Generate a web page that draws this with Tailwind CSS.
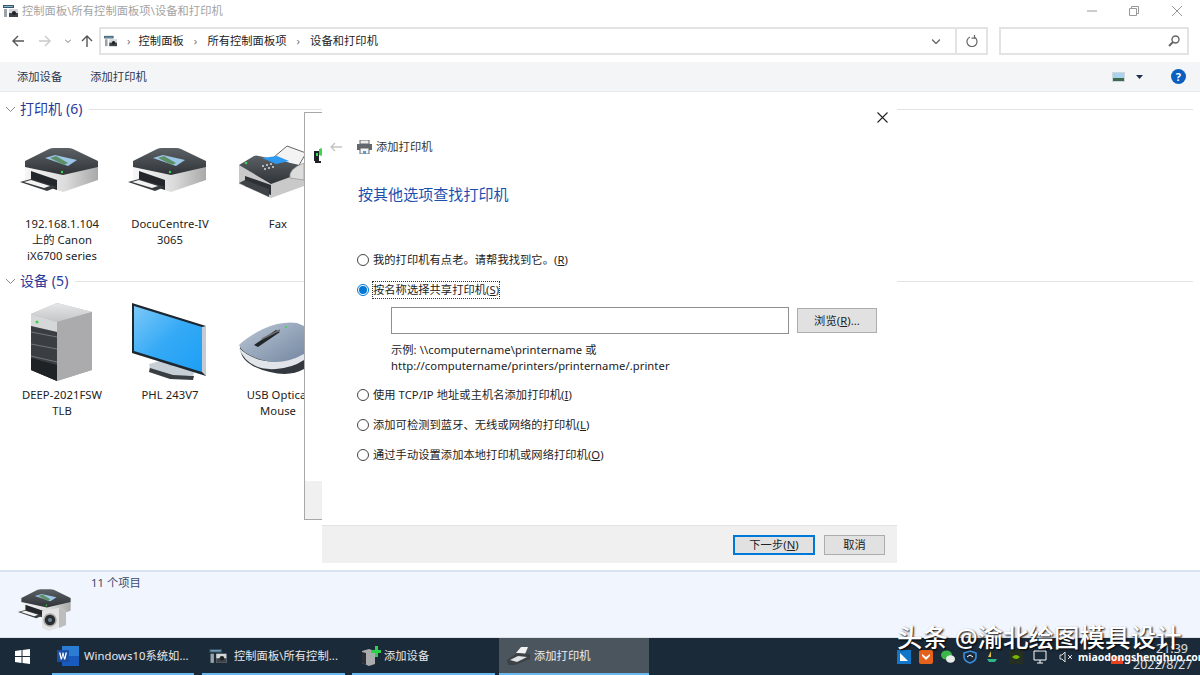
<!DOCTYPE html>
<html lang="zh-CN">
<head>
    <meta charset="UTF-8">
    <title>设备和打印机</title>
    <script src="https://cdn.jsdelivr.net/npm/@tailwindcss/browser@4"></script>
</head>
<body class="w-[1200px] h-[675px] overflow-hidden relative bg-white text-[11.25px] leading-4 tracking-[0.06px] text-[#222] font-['Noto_Sans','Noto_Sans_CJK_SC',sans-serif]">

    <!-- shared icons -->
    <svg width="0" height="0" class="absolute">
        <defs>
            <linearGradient id="lidFill" x1="0" y1="0" x2="0" y2="1"><stop offset="0" stop-color="#5c6166"/><stop offset="1" stop-color="#2f3337"/></linearGradient>
            <linearGradient id="bodyFill" x1="0" y1="0" x2="1" y2="0"><stop offset="0" stop-color="#f6f6f6"/><stop offset=".55" stop-color="#dcdcdc"/><stop offset="1" stop-color="#a9a9a9"/></linearGradient>
            <linearGradient id="screenFill" x1="0" y1="0" x2="1" y2="1"><stop offset="0" stop-color="#7cc8f8"/><stop offset=".5" stop-color="#35aaf6"/><stop offset="1" stop-color="#1d9ff5"/></linearGradient>
            <linearGradient id="towerFill" x1="0" y1="0" x2="0" y2="1"><stop offset="0" stop-color="#e6e7e9"/><stop offset="1" stop-color="#c4c5c7"/></linearGradient>
            <linearGradient id="mouseFill" x1="0" y1="0" x2="1" y2="1"><stop offset="0" stop-color="#bcc8d6"/><stop offset="1" stop-color="#7488a2"/></linearGradient>
            <symbol id="printer" viewBox="20 145 80 50">
                <path d="M25 167v13l38 12 35-12v-13z" fill="url(#bodyFill)"/>
                <path d="M31 171l26 9v10l-26-9z" fill="#23272b"/>
                <path d="M20 182l11-3 26 8-10 4z" fill="#3a3d40"/>
                <path d="M24 182l7-2 19 6-6 2z" fill="#f4f4f4"/>
                <path d="M25 161l24-12q2-1 5-1h14q3 0 5 1l25 12v6l-35 8-38-8z" fill="url(#lidFill)"/>
                <path d="M45 158l10-3 22 5-9 6z" fill="#9cc6e6"/>
                <path d="M50 158l6-2 12 7-4 2z" fill="#5d8f68"/>
                <circle cx="62" cy="172" r="1.200" fill="#37d84b"/>
            </symbol>
            <symbol id="fax" viewBox="238 145 66 54">
                <path d="M274 157l13-11 19 7-8 14z" fill="#f3f3f3" stroke="#666" stroke-width="1"/>
                <path d="M239 165v19l32 14 33-12v-18z" fill="#c9c9c9"/>
                <path d="M245 176l26 9v10l-26-9z" fill="#2d3135"/>
                <path d="M239 183l6-3 24 9v8z" fill="#3f4347"/>
                <path d="M239 165l15-9q2-1 5 0l45 10v6l-33 12z" fill="url(#lidFill)"/>
                <path d="M262 158l15-2 12 5-13 3z" fill="#2f9bf0"/>
                <g fill="#d8d8d8"><circle cx="263" cy="166" r="1"/><circle cx="267" cy="165" r="1"/><circle cx="271" cy="164" r="1"/><circle cx="265" cy="169" r="1"/><circle cx="269" cy="168" r="1"/><circle cx="273" cy="167" r="1"/></g>
                <circle cx="246" cy="163" r="1.300" fill="#37d84b"/>
                <path d="M290 178q-2-9 14-15v17z" fill="#dcdcdc" stroke="#888" stroke-width=".6"/>
            </symbol>
            <symbol id="tower" viewBox="30 303 68 78">
                <path d="M31 314l26-11 35 9v58l-35 11-26-11z" fill="#b2b2b4"/>
                <path d="M31 314l26-11 35 9-35 10z" fill="url(#towerFill)"/>
                <path d="M57 322l35-10v58l-35 11z" fill="#ababad"/>
                <path d="M31 314l26 8v10l-26-6z" fill="#d6d7d9"/>
                <path d="M31 326l26 6v49l-26-11z" fill="#3a3e42"/>
                <path d="M31 332l26 5M31 344l26 5M31 356l26 6" stroke="#80848a" stroke-width=".8" fill="none"/>
                <path d="M31 358l26 7v16l-26-11z" fill="#1f2225"/>
                <circle cx="37" cy="322" r="1.600" fill="#37d84b"/>
            </symbol>
            <symbol id="monitor" viewBox="132 303 74 80">
                <path d="M150 367l21 6 23 3-1 4-23-1-21-7z" fill="#3a3f44"/>
                <path d="M149 364l26-7 20 12-2 7-20-1-23-7z" fill="#c6cfd6"/>
                <path d="M169 356h6v10h-6z" fill="#b4bcc2"/>
                <path d="M132 303l74 23v50l-74-23z" fill="#1d2730"/>
                <path d="M134 306l68 21v45l-68-21z" fill="url(#screenFill)"/>
                <path d="M202 327l4-1v50l-4-4z" fill="#c4ccd2"/>
            </symbol>
            <symbol id="usbmouse" viewBox="238 333 66 59">
                <path d="M240 358q0 18 30 25 20 5 34-3v-12z" fill="#32383e"/>
                <path d="M238 358q10 24 38 22 16-1 28-9v-6q-40 18-66-7z" fill="#e1e4e8"/>
                <path d="M239 356q8-8 24-16 18-8 34-6l7 3v28q-22 12-42 6-20-6-23-15z" fill="url(#mouseFill)"/>
                <path d="M254 356l22-15 4 2-22 15z" fill="#22262a"/>
                <path d="M262 350l18-9" stroke="#6f6f6f" stroke-width="1.500"/>
                <circle cx="286" cy="338" r="1" fill="#37d84b"/>
            </symbol>
            <symbol id="cp" viewBox="0 0 16 14">
                <path d="M0 1h11v3H0z" fill="#3b5566"/>
                <path d="M1 2h9v1H1z" fill="#7fb8d8"/>
                <path d="M1 5h3v8H1z" fill="#9aa3aa"/>
                <path d="M6 5h9v8H6z" fill="#d3d6d8"/>
                <path d="M6 9h9v4H6z" fill="#3d4348"/>
                <circle cx="11" cy="9" r="2" fill="#1e2226"/>
            </symbol>
        </defs>
    </svg>

    <!-- explorer window -->
    <div class="flex flex-col h-[637px]">
        <div class="h-[21px] flex items-center pl-[3px] text-[#a3a3a3]">
            <svg class="w-[16px] h-[14px] mr-[3px]"><use href="#cp"/></svg>
            <span>控制面板\所有控制面板项\设备和打印机</span>
            <div class="ml-auto flex items-center">
                <svg class="w-[10px] h-[10px] mr-[32px]" viewBox="0 0 10 10"><path d="M0 5h10" stroke="#999" fill="none"/></svg>
                <svg class="w-[10px] h-[10px] mr-[33px]" viewBox="0 0 10 10"><path d="M.5 2.500h7v7h-7zM2.500 2.500v-2h7v7h-2" stroke="#999" fill="none"/></svg>
                <svg class="w-[10px] h-[10px] mr-[18px]" viewBox="0 0 10 10"><path d="M0 0l10 10M10 0L0 10" stroke="#999" fill="none"/></svg>
            </div>
        </div>

        <div class="h-[41px] flex items-center pb-[1px]">
            <div class="w-[99px] flex items-center shrink-0">
                <svg class="w-[12px] h-[12px] ml-[12px]" viewBox="0 0 12 12"><path d="M12 6H1M6 1L1 6l5 5" stroke="#555" stroke-width="1.400" fill="none"/></svg>
                <svg class="w-[12px] h-[12px] ml-[15px]" viewBox="0 0 12 12"><path d="M0 6h11M6 1l5 5-5 5" stroke="#c9c9c9" stroke-width="1.400" fill="none"/></svg>
                <svg class="w-[6px] h-[4px] ml-[14px]" viewBox="0 0 6 4"><path d="M0 .5l3 3 3-3" stroke="#777" fill="none"/></svg>
                <svg class="w-[12px] h-[12px] ml-[10px]" viewBox="0 0 12 12"><path d="M6 12V1M1 6l5-5 5 5" stroke="#555" stroke-width="1.400" fill="none"/></svg>
            </div>
            <div class="w-[889px] h-[28px] border-2 border-[#e3e3e3] flex items-center shrink-0">
                <svg class="w-[14px] h-[12px] ml-[3px]"><use href="#cp"/></svg>
                <span class="ml-[9px] mr-[8px] text-[#777]">›</span>
                <span>控制面板</span>
                <span class="mx-[10px] text-[#777]">›</span>
                <span>所有控制面板项</span>
                <span class="mx-[10px] text-[#777]">›</span>
                <span>设备和打印机</span>
                <svg class="w-[8px] h-[5px] ml-auto mr-[15px]" viewBox="0 0 8 5"><path d="M0 .5l4 4 4-4" stroke="#666" stroke-width="1.300" fill="none"/></svg>
                <div class="w-[31px] h-full border-l-2 border-[#e3e3e3] flex items-center justify-center">
                    <svg class="w-[12px] h-[12px]" viewBox="0 0 12 12"><path d="M4 2a5 5 0 1 0 5 .6M8.500 0v3.200H5.500" stroke="#666" stroke-width="1.200" fill="none"/></svg>
                </div>
            </div>
            <div class="w-[190px] h-[28px] ml-[11px] border-2 border-[#e3e3e3] flex items-center justify-end pr-[7px] shrink-0">
                <svg class="w-[12px] h-[12px]" viewBox="0 0 12 12"><circle cx="7.500" cy="4.500" r="3.500" stroke="#666" stroke-width="1.400" fill="none"/><path d="M5 7l-4 4" stroke="#666" stroke-width="2"/></svg>
            </div>
        </div>

        <div class="h-[30px] bg-[#f4f5f7] border-b border-[#e8e9ea] flex items-center pl-[17px] text-[#2a3550]">
            <span>添加设备</span>
            <span class="ml-[28px]">添加打印机</span>
            <svg class="w-[13px] h-[10px] ml-auto" viewBox="0 0 13 10"><path d="M0 0h13v10H0z" fill="#cfd6dc"/><path d="M1 1h11v5H1z" fill="#a9d3ec"/><path d="M1 6h11v3H1z" fill="#3f6a4b"/></svg>
            <svg class="w-[7px] h-[4px] ml-[11px]" viewBox="0 0 7 4"><path d="M0 0h7L3.500 4z" fill="#1e2f4f"/></svg>
            <div class="ml-[28px] mr-[14px] w-[15px] h-[15px] rounded-full bg-[#0a5fc0] flex items-center justify-center text-white text-[11px] font-bold">?</div>
        </div>

        <div class="flex-1 bg-white overflow-hidden">
            <div class="flex items-center h-[20px] mt-[7px] pl-[6px] pr-[7px]">
                <svg class="w-[9px] h-[5px]" viewBox="0 0 9 5"><path d="M0 0l4.500 4.500L9 0" stroke="#888" fill="none"/></svg>
                <span class="ml-[5px] text-[14px] text-[#2a3a9a]">打印机 (6)</span>
                <div class="flex-1 h-[1px] bg-[#e4e4e4] ml-[7px]"></div>
            </div>
            <div class="grid grid-cols-[108px_108px_108px] pl-[8px] mt-[26px] h-[126px]">
                <div class="flex flex-col items-center text-center">
                    <svg class="w-[80px] h-[50px] mr-[4px]"><use href="#printer"/></svg>
                    <div class="mt-[21px]">192.168.1.104<br>上的 Canon<br>iX6700 series</div>
                </div>
                <div class="flex flex-col items-center text-center">
                    <svg class="w-[80px] h-[50px] mr-[4px]"><use href="#printer"/></svg>
                    <div class="mt-[21px]">DocuCentre-IV<br>3065</div>
                </div>
                <div class="flex flex-col items-center text-center">
                    <svg class="w-[66px] h-[54px] mr-[14px] -mb-[4px]"><use href="#fax"/></svg>
                    <div class="mt-[21px]">Fax</div>
                </div>
            </div>
            <div class="flex items-center h-[20px] pl-[6px] pr-[7px]">
                <svg class="w-[9px] h-[5px]" viewBox="0 0 9 5"><path d="M0 0l4.500 4.500L9 0" stroke="#888" fill="none"/></svg>
                <span class="ml-[5px] text-[14px] text-[#2a3a9a]">设备 (5)</span>
                <div class="flex-1 h-[1px] bg-[#e4e4e4] ml-[7px]"></div>
            </div>
            <div class="grid grid-cols-[108px_108px_108px] pl-[8px] mt-[12px]">
                <div class="flex flex-col items-center text-center">
                    <svg class="w-[68px] h-[78px] ml-[4px]"><use href="#tower"/></svg>
                    <div class="mt-[6px]">DEEP-2021FSW<br>TLB</div>
                </div>
                <div class="flex flex-col items-center text-center">
                    <svg class="w-[74px] h-[80px] mr-[2px] -mb-[2px]"><use href="#monitor"/></svg>
                    <div class="mt-[6px]">PHL 243V7</div>
                </div>
                <div class="flex flex-col items-center text-center">
                    <svg class="w-[66px] h-[59px] mt-[19px] mr-[14px]"><use href="#usbmouse"/></svg>
                    <div class="mt-[6px]">USB Optical<br>Mouse</div>
                </div>
            </div>
        </div>

        <div class="h-[67px] bg-[#f1f5fd] border-t-2 border-[#d9e3f0] relative flex">
            <div class="w-[91px] pl-[18px] pt-[15px]">
                <svg class="w-[54px] h-[44px]" viewBox="0 0 54 44">
                    <svg x="0" y="0" width="54" height="34"><use href="#printer"/></svg>
                    <path d="M24 24l17-3 7 3v14l-17 6-7-3z" fill="#e4e4e4"/>
                    <path d="M41 21l7 3v14l-7 3z" fill="#bdbdbd"/>
                    <circle cx="32" cy="33" r="6" fill="#2a2d30" stroke="#a8a8a8" stroke-width="1.500"/>
                    <circle cx="32" cy="33" r="2" fill="#6a8090"/>
                </svg>
            </div>
            <div class="pt-[3px] text-[#3a4a6a]">11 个项目</div>
        </div>
    </div>

    <!-- taskbar -->
    <div class="h-[38px] bg-[#1b2a38] border-t border-[#dfe3e8] flex text-white/90 relative">
        <div class="w-[52px] flex items-center pl-[15px]">
            <svg class="w-[15px] h-[15px]" viewBox="0 0 15 15"><path d="M0 2l6.500-1v6H0zM7.500 1L15 0v7H7.500zM0 8h6.500v6L0 13zM7.500 8H15v7l-7.500-1z" fill="#fff"/></svg>
        </div>
        <div class="w-[142px] flex items-center border-b-2 border-[#6ab7ee] pl-[5px] gap-[5px]">
            <svg class="w-[22px] h-[20px]" viewBox="0 0 22 20"><path d="M5 0h17v20H5z" fill="#2b7cd3"/><path d="M5 10h17v10H5z" fill="#185abd"/><path d="M0 4h12v12H0z" fill="#1b4fa6"/><path d="M2 6.500h1.500l1 5 1-5h1l1 5 1-5H10l-1.700 7H7l-1-4.500-1 4.500H3.700z" fill="#fff"/></svg>
            <span class="whitespace-nowrap">Windows10系统如...</span>
        </div>
        <div class="w-[143px] ml-[8px] flex items-center border-b-2 border-[#6ab7ee] pl-[7px] gap-[6px]">
            <svg class="w-[19px] h-[16px]"><use href="#cp"/></svg>
            <span class="whitespace-nowrap">控制面板\所有控制...</span>
        </div>
        <div class="w-[143px] ml-[7px] flex items-center border-b-2 border-[#6ab7ee] pl-[9px] gap-[3px]">
            <svg class="w-[20px] h-[20px]" viewBox="0 0 20 20"><path d="M1 5l7-2 6 2v13l-6 2-7-3z" fill="#a9abad"/><path d="M1 6l4 1v12l-4-2z" fill="#2b2f33"/><path d="M14 0h3v4h3v3h-3v4h-3V7h-4V4h4z" fill="#2ed24a"/></svg>
            <span>添加设备</span>
        </div>
        <div class="w-[150px] ml-[4px] flex items-center bg-[#4a555e] border-b-2 border-[#6ab7ee] pl-[8px] gap-[4px]">
            <svg class="w-[23px] h-[18px]" viewBox="0 0 23 18"><path d="M9 6l5-6h7l-3 7z" fill="#f1f1f1"/><path d="M0 13l10-7 13 1v5L8 18H1z" fill="#3c4246"/><path d="M3 13l8-4 9 1-10 5z" fill="#dfe3e6"/></svg>
            <span>添加打印机</span>
        </div>
        <!-- tray -->
        <div class="absolute left-[897px] top-[12px] flex items-center gap-[8px]">
            <svg class="w-[14px] h-[14px]" viewBox="0 0 14 14"><path d="M0 0h14v14H0z" fill="#1277c9"/><path d="M3 3l8 8H3z" fill="#fff"/></svg>
            <svg class="w-[14px] h-[14px]" viewBox="0 0 14 14"><path d="M0 2q0-2 2-2h10q2 0 2 2v10q0 2-2 2H2q-2 0-2-2z" fill="#e4621b"/><path d="M3 4l4 3 4-3v2L7 10 3 6z" fill="#fff"/></svg>
            <svg class="w-[14px] h-[14px]" viewBox="0 0 14 14"><ellipse cx="5.500" cy="5" rx="5.500" ry="4.500" fill="#3cb84a"/><ellipse cx="9.500" cy="9" rx="4.500" ry="3.800" fill="#e8ece8"/></svg>
            <svg class="w-[14px] h-[14px]" viewBox="0 0 14 14"><path d="M7 1l6 2v4q0 4-6 6-6-2-6-6V3z" fill="none" stroke="#3a8fe0" stroke-width="1.600"/><path d="M4 7l3-2 3 2" fill="none" stroke="#fff"/></svg>
            <svg class="w-[14px] h-[14px]" viewBox="0 0 14 14"><path d="M6 1L3 7h3z" fill="#e6c040"/><path d="M2 9h10l-2 3H4z" fill="#2fb58a"/></svg>
            <svg class="w-[14px] h-[14px] ml-[2px]" viewBox="0 0 14 14"><path d="M0 0h14v14H0z" fill="#252f24"/><path d="M3 7q4-4 8 0-4 4-8 0z" fill="#76b900"/></svg>
            <svg class="w-[14px] h-[14px] ml-[2px]" viewBox="0 0 14 14"><path d="M1 1h12v9H1zM7 10v3M4 13h6" stroke="#fff" fill="none"/></svg>
            <svg class="w-[14px] h-[12px] ml-[4px]" viewBox="0 0 14 12"><path d="M1 4h2l3-3v10L3 8H1zM9 4l4 4M13 4l-4 4" stroke="#ddd" fill="none"/></svg>
            <div class="w-[12px] h-[8px] rounded-t-full bg-[#e8431f] ml-[30px] mt-[6px]"></div>
        </div>
        <div class="absolute left-[1133px] top-[3px] w-[55px] text-right text-[12.500px] leading-4 tracking-normal whitespace-nowrap text-white/85">21:39</div>
        <div class="absolute left-[1133px] top-[19px] w-[55px] text-right text-[12.500px] leading-4 tracking-normal whitespace-nowrap text-white/85">2022/8/27</div>
    </div>

    <!-- window behind the dialog -->
    <div class="absolute left-[304px] top-[112px] w-[40px] h-[408px] bg-white border border-[#a8a8a8] flex flex-col">
        <svg class="w-[8px] h-[15px] ml-[9px] mt-[35px]" viewBox="0 0 8 15"><path d="M0 3h5v10H0z" fill="#1e2226"/><path d="M1 13h6v2H1z" fill="#1e2226"/><path d="M2 5h2v3H2z" fill="#37d84b"/><path d="M5 1l3-1v8l-3-1z" fill="#37d84b"/></svg>
        <div class="mt-auto h-[38px] bg-[#f0f0f0]"></div>
    </div>

    <!-- add printer dialog -->
    <div class="absolute left-[322px] top-[95px] w-[575px] h-[468px] bg-white flex flex-col">
        <div class="h-[45px] flex justify-end pr-[9px] pt-[17px]">
            <svg class="w-[11px] h-[11px]" viewBox="0 0 11 11"><path d="M.5.500l10 10M10.500.500l-10 10" stroke="#222" stroke-width="1.100" fill="none"/></svg>
        </div>
        <div class="h-[14px] flex items-center pl-[8px]">
            <svg class="w-[12px] h-[10px]" viewBox="0 0 12 10"><path d="M12 5H1M5 1L1 5l4 4" stroke="#c4c4c4" stroke-width="1.300" fill="none"/></svg>
            <svg class="w-[15px] h-[14px] ml-[15px]" viewBox="0 0 15 14"><path d="M3 0h9v4H3z" fill="#eee" stroke="#666"/><path d="M0 4h15v6H0z" fill="#62686d"/><path d="M3 8h9v6H3z" fill="#f5f5f5" stroke="#666"/><path d="M6 11h3v3H6z" fill="#4aa0e0"/></svg>
            <span class="ml-[4px] text-[#333]">添加打印机</span>
        </div>
        <div class="h-[24px] mt-[28px] pl-[36px] flex items-center text-[15px] text-[#1a4fb0]">按其他选项查找打印机</div>

        <div class="mt-[39px] pl-[35px]">
            <div class="h-[30px] flex items-center">
                <div class="w-[12px] h-[12px] rounded-full border border-[#444] bg-white"></div>
                <span class="ml-[4px]">我的打印机有点老。请帮我找到它。(<span class="underline">R</span>)</span>
            </div>
            <div class="h-[30px] flex items-center">
                <div class="w-[12px] h-[12px] rounded-full border border-[#0078d7] flex items-center justify-center"><div class="w-[8px] h-[8px] rounded-full bg-[#0078d7]"></div></div>
                <span class="ml-[4px] outline-1 outline-dotted outline-[#333]">按名称选择共享打印机(<span class="underline">S</span>)</span>
            </div>
            <div class="flex items-center mt-[2px] pl-[34px]">
                <div class="w-[398px] h-[27px] border-[1.500px] border-[#8f8f8f] bg-white"></div>
                <div class="w-[80px] h-[25px] ml-[8px] bg-[#e1e1e1] border border-[#adadad] flex items-center justify-center">浏览(<span class="underline">R</span>)...</div>
            </div>
            <div class="mt-[8px] pl-[34px]">示例: \\computername\printername 或<br>http://computername/printers/printername/.printer</div>
            <div class="h-[30px] flex items-center mt-[6px]">
                <div class="w-[12px] h-[12px] rounded-full border border-[#444] bg-white"></div>
                <span class="ml-[4px]">使用 TCP/IP 地址或主机名添加打印机(<span class="underline">I</span>)</span>
            </div>
            <div class="h-[30px] flex items-center">
                <div class="w-[12px] h-[12px] rounded-full border border-[#444] bg-white"></div>
                <span class="ml-[4px]">添加可检测到蓝牙、无线或网络的打印机(<span class="underline">L</span>)</span>
            </div>
            <div class="h-[30px] flex items-center">
                <div class="w-[12px] h-[12px] rounded-full border border-[#444] bg-white"></div>
                <span class="ml-[4px]">通过手动设置添加本地打印机或网络打印机(<span class="underline">O</span>)</span>
            </div>
        </div>

        <div class="mt-auto h-[38px] bg-[#f0f0f0] border-t border-[#e3e3e3] flex items-center justify-end pr-[12px]">
            <div class="w-[82px] h-[20px] bg-[#e1e1e1] border-2 border-[#0078d7] flex items-center justify-center">下一步(<span class="underline">N</span>)</div>
            <div class="w-[61px] h-[20px] ml-[9px] bg-[#e1e1e1] border border-[#adadad] flex items-center justify-center">取消</div>
        </div>
    </div>

    <!-- watermark -->
    <div class="absolute left-[897px] top-[621px] text-[25.500px] leading-8 font-medium tracking-normal text-white whitespace-nowrap [text-shadow:1px_1px_2px_#000]">头条 @渝北绘图模具设计</div>
    <div class="absolute left-[1078px] top-[649px] text-[10.500px] leading-4 tracking-normal font-bold text-white whitespace-nowrap">miaodongshenghuo.com</div>
</body>
</html>
